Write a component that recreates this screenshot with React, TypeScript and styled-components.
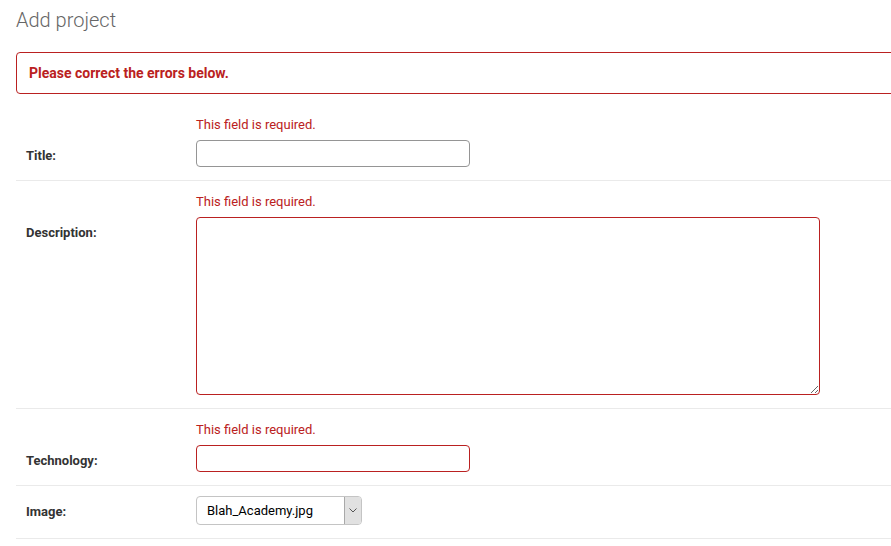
import React from "react";
import styled, { createGlobalStyle } from "styled-components";

const GlobalStyle = createGlobalStyle`
  html, body {
    margin: 0;
    padding: 0;
    background: #fff;
    overflow: hidden;
  }
  body {
    font-family: Roboto, "Liberation Sans", Arial, sans-serif;
    color: #333;
  }
`;

const Content = styled.div`
  width: 1000px;
  padding: 8px 0 0 16px;
`;

const Title = styled.h1`
  margin: 0 0 20px;
  font-size: 20px;
  font-weight: 300;
  line-height: 24px;
  color: #666;
`;

const ErrorNote = styled.p`
  margin: 0 0 10px;
  padding: 10px 12px;
  border: 1px solid #ba2121;
  border-radius: 4px;
  color: #ba2121;
  font-size: 14px;
  font-weight: 700;
  line-height: 20px;
`;

const Row = styled.div`
  padding: 10px;
  border-bottom: 1px solid #eaeaea;
  font-size: 13px;
`;

const ErrorList = styled.ul`
  list-style: none;
  margin: 0 0 5px 170px;
  padding: 0;
  color: #ba2121;
  line-height: 21px;
`;

const FieldLine = styled.div`
  display: flex;
  align-items: flex-start;
  padding-bottom: 3px;
`;

const Label = styled.label`
  flex-shrink: 0;
  width: 160px;
  padding: 8px 10px 0 0;
  line-height: 16px;
  font-weight: 700;
  color: #333;
`;

const TextInput = styled.input<{ $invalid?: boolean }>`
  box-sizing: border-box;
  width: 274px;
  height: 27px;
  margin: 0;
  padding: 5px 6px;
  border: 1px solid ${(p) => (p.$invalid ? "#ba2121" : "#959595")};
  border-radius: 4px;
  font: 13px Roboto, "Liberation Sans", sans-serif;
  color: #333;
  background: #fff;
  outline: none;
`;

const TextArea = styled.textarea<{ $invalid?: boolean }>`
  box-sizing: border-box;
  width: 624px;
  height: 178px;
  margin: 0;
  padding: 5px 6px;
  border: 1px solid ${(p) => (p.$invalid ? "#ba2121" : "#959595")};
  border-radius: 4px;
  font: 13px Roboto, "Liberation Sans", sans-serif;
  color: #333;
  background: #fff;
  outline: none;
  display: block;
`;

const SelectBox = styled.div`
  box-sizing: border-box;
  display: flex;
  align-items: stretch;
  width: 166px;
  height: 29px;
  border: 1px solid #c4c4c4;
  border-radius: 4px;
  overflow: hidden;
  background: #fff;
`;

const SelectValue = styled.span`
  flex: 1;
  display: flex;
  align-items: center;
  padding-left: 10px;
  font-size: 13px;
  color: #000;
`;

const SelectButton = styled.span`
  width: 16px;
  display: flex;
  align-items: center;
  justify-content: center;
  background: #e1e1e1;
  border-left: 1px solid #a9a9a9;
`;

const Chevron = () => (
  <svg width="8" height="5" viewBox="0 0 8 5" fill="none">
    <path d="M0.5 0.5 L4 4 L7.5 0.5" stroke="#555" strokeWidth="1" />
  </svg>
);

export default function App() {
  return (
    <>
      <GlobalStyle />
      <Content>
        <Title>Add project</Title>
        <ErrorNote>Please correct the errors below.</ErrorNote>
        <Row>
          <ErrorList>
            <li>This field is required.</li>
          </ErrorList>
          <FieldLine>
            <Label htmlFor="id_title">Title:</Label>
            <TextInput id="id_title" type="text" />
          </FieldLine>
        </Row>
        <Row>
          <ErrorList>
            <li>This field is required.</li>
          </ErrorList>
          <FieldLine>
            <Label htmlFor="id_description">Description:</Label>
            <TextArea id="id_description" $invalid />
          </FieldLine>
        </Row>
        <Row>
          <ErrorList>
            <li>This field is required.</li>
          </ErrorList>
          <FieldLine>
            <Label htmlFor="id_technology">Technology:</Label>
            <TextInput id="id_technology" type="text" $invalid />
          </FieldLine>
        </Row>
        <Row>
          <FieldLine>
            <Label>Image:</Label>
            <SelectBox>
              <SelectValue>Blah_Academy.jpg</SelectValue>
              <SelectButton>
                <Chevron />
              </SelectButton>
            </SelectBox>
          </FieldLine>
        </Row>
      </Content>
    </>
  );
}
